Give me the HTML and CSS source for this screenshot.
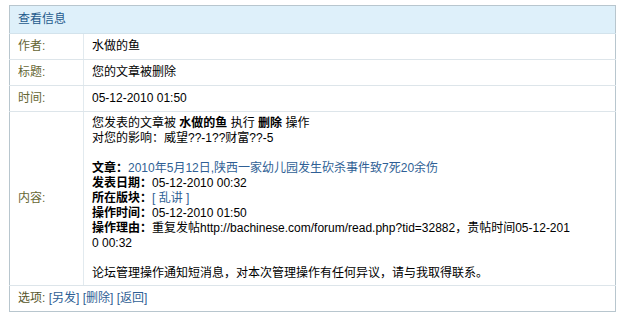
FILE: index.html
```html
<!DOCTYPE html>
<html lang="zh-CN">
<head>
    <meta charset="UTF-8">
    <title>查看信息</title>
    <link rel="stylesheet" href="styles.css">
</head>
<body>

    <table class="msg-table">
        <tr>
            <th class="msg-head" colspan="2">查看信息</th>
        </tr>
        <tr>
            <td class="label">作者:</td>
            <td class="value">水做的鱼</td>
        </tr>
        <tr>
            <td class="label">标题:</td>
            <td class="value">您的文章被删除</td>
        </tr>
        <tr>
            <td class="label">时间:</td>
            <td class="value">05-12-2010 01:50</td>
        </tr>
        <tr>
            <td class="label">内容:</td>
            <td class="value content">
                您发表的文章被 <b>水做的鱼</b> 执行 <b>删除</b> 操作<br>
                对您的影响：威望??-1??财富??-5<br>
                <br>
                <b>文章：</b><a href="#">2010年5月12日,陕西一家幼儿园发生砍杀事件致7死20余伤</a><br>
                <b>发表日期：</b>05-12-2010 00:32<br>
                <b>所在版块：</b><a href="#">[ 乱讲 ]</a><br>
                <b>操作时间：</b>05-12-2010 01:50<br>
                <b>操作理由：</b>重复发帖http://bachinese.com/forum/read.php?tid=32882，贵帖时间05-12-2010 00:32<br>
                <br>
                论坛管理操作通知短消息，对本次管理操作有任何异议，请与我取得联系。
            </td>
        </tr>
        <tr>
            <td class="options" colspan="2">选项: <a href="#">[另发]</a> <a href="#">[删除]</a> <a href="#">[返回]</a></td>
        </tr>
    </table>

</body>
</html>
```

FILE: styles.css
```css
body {
    margin: 5px 0 0 9px;
    font-family: "Liberation Sans", "Noto Sans CJK SC", sans-serif;
    font-size: 12px;
    color: #000;
    background: #fff;
}

a {
    color: #2f5f95;
    text-decoration: none;
}

.msg-table {
    width: 607px;
    border-collapse: collapse;
    border: 1px solid #b8c6ce;
}

.msg-table td, .msg-table th {
    padding: 0 8px;
    line-height: 15px;
}

.msg-head {
    height: 27px;
    background-color: #def0fa;
    color: #1e5a8c;
    font-weight: normal;
    text-align: left;
    font-size: 12px;
    border-bottom: 1px solid #d3e3ec;
}

.label {
    width: 57px;
    height: 25px;
    color: #666633;
    border-right: 1px solid #e2eaef;
    border-bottom: 1px solid #dde5ea;
}

.value {
    height: 25px;
    border-bottom: 1px solid #dde5ea;
}

.msg-table .content {
    padding: 4px 40px 4px 8px;
    word-break: break-all;
}

.options {
    height: 25px;
    color: #555528;
}

.options a {
    color: #2f5f95;
}
```
